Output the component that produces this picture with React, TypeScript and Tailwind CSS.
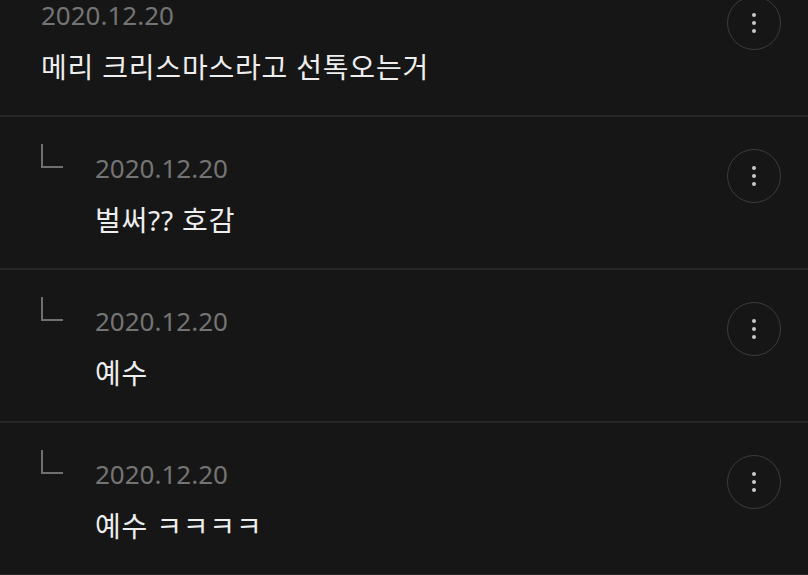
const comments = [
  { date: "2020.12.20", text: "메리 크리스마스라고 선톡오는거", reply: false },
  { date: "2020.12.20", text: "벌써?? 호감", reply: true },
  { date: "2020.12.20", text: "예수", reply: true },
  { date: "2020.12.20", text: "예수 ㅋㅋㅋㅋ", reply: true },
];

function MoreButton() {
  return (
    <button className="w-[54px] h-[54px] shrink-0 rounded-full border border-[#3c3c3c] flex flex-col items-center justify-center gap-[3.5px]">
      <span className="w-[4.5px] h-[4.5px] rounded-full bg-[#c8c8c8]" />
      <span className="w-[4.5px] h-[4.5px] rounded-full bg-[#c8c8c8]" />
      <span className="w-[4.5px] h-[4.5px] rounded-full bg-[#c8c8c8]" />
    </button>
  );
}

function ReplyMark() {
  return (
    <div className="w-[54px] shrink-0">
      <div className="w-[22px] h-[24px] -mt-[8px] border-l-2 border-b-2 border-[#6f6f6f]" />
    </div>
  );
}

export default function App() {
  return (
    <div
      className="w-[808px] h-[575px] overflow-hidden bg-[#161616]"
      style={{ fontFamily: '"Noto Sans", "Noto Sans CJK KR", sans-serif' }}
    >
      <div className="-mt-[36px]">
        {comments.map((c, i) => (
          <div key={i} className="flex pl-[41px] pr-[27px] pt-[35px] pb-[30px] border-b-2 border-[#262626]">
            {c.reply && <ReplyMark />}
            <div className="flex-1 flex flex-col">
              <span className="text-[26px] leading-[32px] text-[#747474]">{c.date}</span>
              <p className="mt-[18px] text-[28px] leading-[36px] tracking-[0.8px] text-[#eeeeee]">{c.text}</p>
            </div>
            <div className="-mt-[3px]">
              <MoreButton />
            </div>
          </div>
        ))}
      </div>
    </div>
  );
}
